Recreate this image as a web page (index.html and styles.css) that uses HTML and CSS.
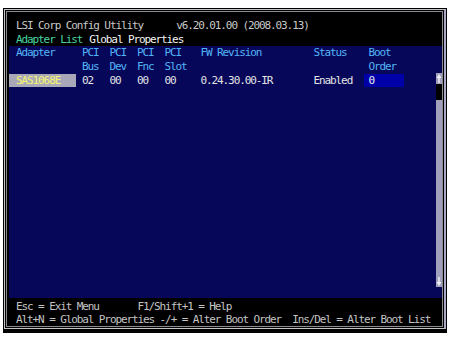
FILE: index.html
```html
<!DOCTYPE html>
<html lang="en">
<head>
    <meta charset="UTF-8">
    <meta name="viewport" content="width=device-width, initial-scale=1.0">
    <title>LSI Corp Config Utility</title>
    <link rel="stylesheet" href="styles.css">
</head>
<body>
    <div class="screen">
        <div class="frame">
            <div class="inner">
                <div class="title">LSI Corp Config Utility      v6.20.01.00 (2008.03.13)</div>
                <div class="tabs">
                    <span class="tab-active">Adapter List</span>
                    <span class="tab">Global Properties</span>
                </div>

                <div class="panel">
                    <div class="list">
                        <div class="row head">
                            <span class="first">Adapter</span>
                            <span>PCI</span>
                            <span>PCI</span>
                            <span>PCI</span>
                            <span>PCI</span>
                            <span></span>
                            <span>FW Revision</span>
                            <span>Status</span>
                            <span>Boot</span>
                        </div>
                        <div class="row head">
                            <span class="first"></span>
                            <span>Bus</span>
                            <span>Dev</span>
                            <span>Fnc</span>
                            <span>Slot</span>
                            <span></span>
                            <span></span>
                            <span></span>
                            <span>Order</span>
                        </div>
                        <div class="row data">
                            <span class="first"><span class="selected">SAS1068E</span></span>
                            <span>02</span>
                            <span>00</span>
                            <span>00</span>
                            <span>00</span>
                            <span></span>
                            <span>0.24.30.00-IR</span>
                            <span>Enabled</span>
                            <span><span class="boot-box">0</span></span>
                        </div>
                    </div>
                    <div class="scrollbar">
                        <svg class="arrow" width="6" height="11" viewBox="0 0 6 11">
                            <path d="M3 1 L5.5 5 L0.5 5 Z" fill="#eeeef6"/>
                            <rect x="2" y="5" width="2" height="5" fill="#d8d8e4"/>
                        </svg>
                        <div class="thumb"></div>
                        <div class="track"></div>
                        <svg class="arrow" width="6" height="11" viewBox="0 0 6 11">
                            <rect x="2" y="1" width="2" height="5" fill="#d8d8e4"/>
                            <path d="M3 10 L5.5 6 L0.5 6 Z" fill="#eeeef6"/>
                        </svg>
                    </div>
                </div>

                <div class="help">
                    <div class="help-line">Esc = Exit Menu       F1/Shift+1 = Help</div>
                    <div class="help-line">Alt+N = Global Properties -/+ = Alter Boot Order  Ins/Del = Alter Boot List</div>
                </div>
            </div>
        </div>
    </div>
</body>
</html>
```

FILE: styles.css
```css
body {
    margin: 0;
    background-color: #ffffff;
    font-family: "DejaVu Sans Mono", "Liberation Mono", monospace;
    font-size: 11px;
    letter-spacing: -1.1px;
}
.screen {
    box-sizing: border-box;
    width: 444px;
    height: 325px;
    margin: 8px 0 0 3px;
    padding: 1px 1px 4px 1px;
    background-color: #000000;
}
.frame {
    box-sizing: border-box;
    height: 100%;
    padding: 1px;
    border: 1px solid #c4c4c8;
    border-right: 2px solid #a8a8c4;
}
.inner {
    box-sizing: border-box;
    height: 100%;
    padding-top: 7px;
    border: 1px solid #8c8c90;
    display: flex;
    flex-direction: column;
}
.title {
    height: 14px;
    line-height: 14px;
    padding-left: 9px;
    white-space: pre;
    color: #c8c8c8;
}
.tabs {
    height: 13px;
    line-height: 13px;
    padding-left: 9px;
    display: flex;
    gap: 7px;
}
.tab-active {
    color: #48d4a0;
}
.tab {
    color: #f4f4f4;
}
.panel {
    height: 252px;
    margin-left: 2px;
    background-color: #07075a;
    display: flex;
}
.list {
    flex: 1;
}
.row {
    display: grid;
    grid-template-columns: 73px 27.5px 27.5px 27.5px 27.5px 8.5px 113px 55px 1fr;
    height: 13.5px;
    line-height: 13.5px;
    white-space: pre;
}
.row:first-child {
    height: 14px;
    line-height: 14px;
}
.head {
    color: #52b6f6;
}
.data {
    color: #e4e4e4;
    height: 13px;
    line-height: 13px;
}
.first {
    padding-left: 7px;
}
.data .first {
    padding-left: 0;
}
.selected {
    display: block;
    width: 67px;
    padding-left: 7px;
    box-sizing: border-box;
    background-color: #a8a8b8;
    color: #f4f470;
}
.boot-box {
    display: block;
    width: 40px;
    margin-left: -4.5px;
    padding-left: 4.5px;
    box-sizing: border-box;
    background-color: #0000a8;
    color: #f0f0f0;
}
.scrollbar {
    width: 6px;
    margin-top: 27px;
    height: 214px;
    background-color: #a0a0bc;
    display: flex;
    flex-direction: column;
}
.arrow {
    display: block;
    flex: none;
}
.thumb {
    height: 16px;
    background-color: #000000;
}
.track {
    flex: 1;
}
.help {
    padding: 2px 0 0 9px;
    color: #c4c4c4;
}
.help-line {
    height: 13px;
    line-height: 13px;
    white-space: pre;
}
```
